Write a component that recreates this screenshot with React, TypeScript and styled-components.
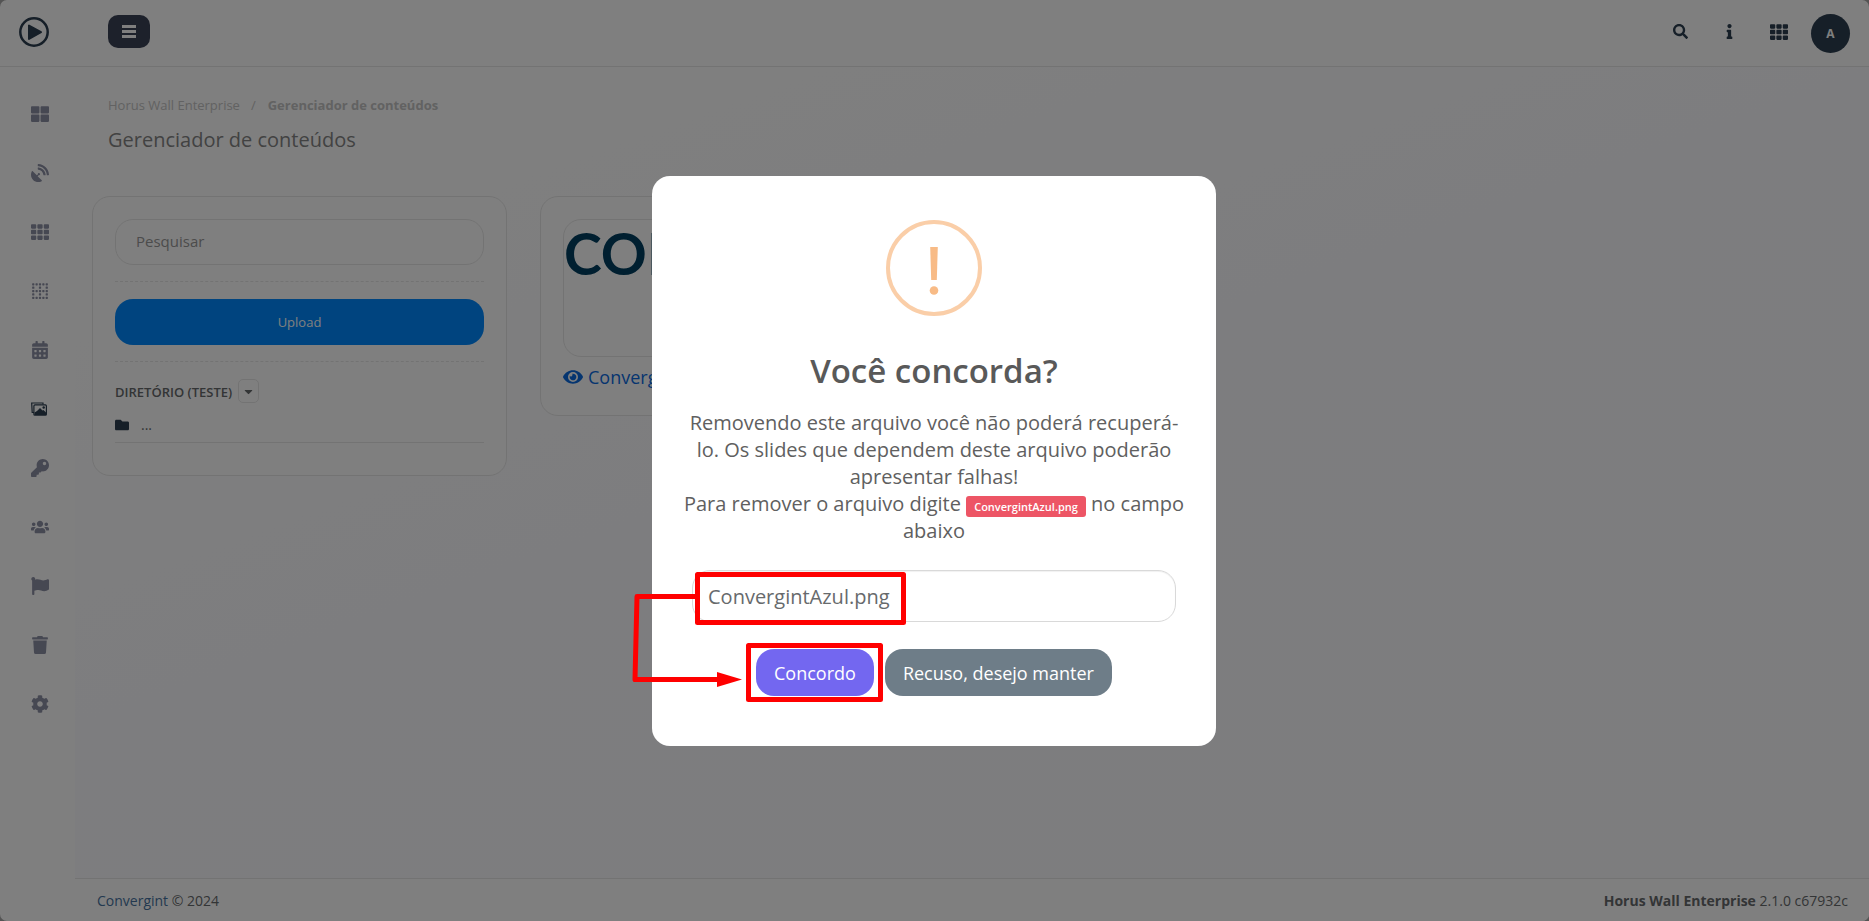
import React from 'react';
import styled, { createGlobalStyle, css } from 'styled-components';
import {
  FaThLarge,
  FaTh,
  FaBorderNone,
  FaCalendarAlt,
  FaSearch,
  FaInfo,
  FaFolder,
  FaEye,
  FaCaretDown,
  FaSatelliteDish,
  FaKey,
  FaUsers,
  FaFlag,
  FaTrash,
  FaCog,
} from 'react-icons/fa';

const Global = createGlobalStyle`
  *, *::before, *::after { box-sizing: border-box; }
  body {
    margin: 0;
    background: #a8a8a8;
    color: #676a6c;
    font-family: 'Open Sans', 'Noto Sans', sans-serif;
    font-size: 14px;
  }
  button, input { font-family: inherit; margin: 0; }
  a { color: inherit; text-decoration: none; }
`;

const line = '#e7e7e7';
const navy = '#2c3e50';

const Page = styled.div`
  display: flex;
  flex-direction: column;
  min-height: 100vh;
  border-radius: 7px;
  overflow: hidden;
  background: #fff;
`;

const Header = styled.header`
  display: flex;
  align-items: center;
  height: 67px;
  padding: 0 19px 3px;
  border-bottom: 1px solid ${line};
`;

const Brand = styled.a`
  display: flex;
  width: 89px;
`;

const MenuButton = styled.button`
  display: grid;
  place-items: center;
  width: 42px;
  height: 33px;
  border: 0;
  border-radius: 10px;
  background: #3b4256;
  color: #fff;
`;

const HeaderTools = styled.nav`
  display: flex;
  align-items: center;
  margin-left: auto;
`;

const ToolButton = styled.button<{ $size: number }>`
  display: grid;
  place-items: center;
  width: 49px;
  height: 38px;
  padding: 0;
  border: 0;
  background: none;
  color: ${navy};
  font-size: ${(p) => p.$size}px;
`;

const Avatar = styled.button`
  width: 39px;
  height: 39px;
  margin-left: 8px;
  margin-top: 4px;
  padding: 0;
  border: 0;
  border-radius: 50%;
  background: ${navy};
  color: #fff;
  font-size: 12px;
  font-weight: 700;
`;

const Body = styled.div`
  display: flex;
  flex: 1;
`;

const Sidebar = styled.nav`
  flex: none;
  width: 75px;
  padding-top: 17px;
`;

const SideLink = styled.a<{ $active?: boolean }>`
  display: flex;
  align-items: center;
  height: 59px;
  padding-left: 31px;
  font-size: 18px;
  color: ${(p) => (p.$active ? navy : '#8d90a5')};
  svg {
    width: auto;
    height: 1em;
  }
`;

const Column = styled.div`
  display: flex;
  flex: 1;
  flex-direction: column;
  min-width: 0;
`;

const Content = styled.main`
  flex: 1;
  padding: 28px 17px;
  background: linear-gradient(160deg, #ffffff 10%, #fbfbfe 45%, #fafafd 100%);
`;

const Breadcrumb = styled.ol`
  display: flex;
  gap: 11px;
  margin: 0;
  padding: 0 16px;
  list-style: none;
  font-size: 13px;
  line-height: 20px;
  color: #c4c4c4;
`;

const Crumb = styled.li<{ $current?: boolean }>`
  ${(p) =>
    p.$current &&
    css`
      font-weight: 700;
      &::before {
        content: '/';
        margin-right: 12px;
        font-weight: 400;
      }
    `}
`;

const Title = styled.h1`
  margin: 10px 0 0;
  padding: 0 16px;
  font-size: 20px;
  font-weight: 400;
  line-height: 30px;
  color: #858585;
`;

const Cards = styled.div`
  display: flex;
  align-items: flex-start;
  gap: 33px;
  margin-top: 41px;
`;

const Card = styled.section`
  width: 415px;
  padding: 22px 22px 26px;
  border: 1px solid ${line};
  border-radius: 18px;
  background: #fff;
`;

const SearchInput = styled.input`
  display: block;
  width: 100%;
  height: 46px;
  padding: 0 20px 2px;
  border: 1px solid ${line};
  border-radius: 18px;
  background: #fff;
  font-size: 15px;
  &::placeholder { color: #989898; opacity: 1; }
`;

const Rule = styled.hr`
  margin: 16px 0 17px;
  border: 0;
  border-top: 1px dashed ${line};
`;

const UploadButton = styled.button`
  display: block;
  width: 100%;
  height: 46px;
  border: 0;
  border-radius: 18px;
  background: #0088ff;
  color: #fff;
  font-size: 13px;
`;

const Directory = styled.div`
  display: flex;
  align-items: center;
  gap: 6px;
`;

const DirectoryTitle = styled.h2`
  margin: 2px 0 0;
  font-size: 13px;
  font-weight: 600;
  line-height: 20px;
`;

const CaretButton = styled.button`
  display: grid;
  place-items: center;
  width: 21px;
  height: 24px;
  padding: 0;
  border: 1px solid ${line};
  border-radius: 5px;
  background: #fff;
  color: #676a6c;
  font-size: 13px;
`;

const Folder = styled.a`
  display: flex;
  align-items: center;
  gap: 12px;
  margin: 13px 0 6px;
  padding-bottom: 8px;
  border-bottom: 1px solid ${line};
  line-height: 18px;
  svg { color: ${navy}; }
`;

const Preview = styled.div`
  height: 138px;
  padding-top: 3px;
  border: 1px solid ${line};
  border-radius: 18px;
  color: #003f60;
  font-family: Lato, sans-serif;
  font-size: 57px;
  font-weight: 700;
  line-height: 60px;
  white-space: nowrap;
`;

const FileLink = styled.a`
  display: flex;
  align-items: center;
  gap: 5px;
  margin-top: 8px;
  font-size: 18px;
  line-height: 24px;
  color: #0b6be0;
`;

const Footer = styled.footer`
  display: flex;
  justify-content: space-between;
  padding: 12px 21px 10px 22px;
  border-top: 1px solid ${line};
  background: #fff;
  line-height: 20px;
`;

const FooterLink = styled.a`
  color: #4773a0;
`;

const Backdrop = styled.div`
  position: fixed;
  inset: 0;
  display: grid;
  place-items: center;
  padding: 1px 1px 0 0;
  background: rgba(0, 0, 0, 0.5);
`;

const Dialog = styled.div`
  position: relative;
  display: flex;
  flex-direction: column;
  align-items: center;
  width: 564px;
  max-width: 100%;
  padding: 44px 28px 50px;
  border-radius: 18px;
  background: #fff;
  text-align: center;
`;

const WarningIcon = styled.svg`
  width: 96px;
  height: 96px;
`;

const DialogTitle = styled.h2`
  margin: 35px 0 18px;
  font-size: 33px;
  font-weight: 600;
  line-height: 40px;
  color: #595959;
`;

const DialogText = styled.p`
  margin: 0;
  font-size: 20px;
  line-height: 27px;
  color: #606060;
`;

const FileBadge = styled.span`
  display: inline-block;
  padding: 0 8px;
  border-radius: 3px;
  background: #ed5565;
  color: #fff;
  font-size: 11px;
  font-weight: 600;
  line-height: 21px;
`;

const ConfirmInput = styled.input`
  width: 484px;
  max-width: 100%;
  height: 52px;
  margin: 26px 0 27px;
  padding: 0 15px;
  border: 1px solid #d9d9d9;
  border-radius: 18px;
  background: #fff;
  box-shadow: inset 0 1px 1px rgba(0, 0, 0, 0.06);
  color: #676a6c;
  font-size: 20px;
`;

const Actions = styled.div`
  display: flex;
  gap: 11px;
`;

const ActionButton = styled.button<{ $tone: 'confirm' | 'cancel' }>`
  height: 47px;
  padding: 0 18px;
  border: 0;
  border-radius: 18px;
  background: ${(p) => (p.$tone === 'confirm' ? '#7367f0' : '#6e7d88')};
  color: #fff;
  font-size: 18px;
  font-weight: 500;
`;

const Marker = styled.svg`
  position: absolute;
  left: -32px;
  bottom: 0;
  width: 300px;
  height: 200px;
  pointer-events: none;
`;

function BarsIcon() {
  return (
    <svg width="14" height="13" viewBox="0 0 14 13" fill="currentColor">
      <path d="M0 0h14v3H0zM0 5h14v3H0zM0 10h14v3H0z" />
    </svg>
  );
}

function ImagesIcon() {
  return (
    <svg viewBox="0 0 16 18" fill="none" stroke="currentColor">
      <path d="M3 12.500H1.200L.7 3h11.300v1.500" strokeWidth="1.200" />
      <rect x="2.900" y="4.900" width="12.500" height="10.300" rx="1" strokeWidth="1.200" />
      <path d="M3.500 15v-2.500l2.500-1.500 3-3 2.500 2.500 1-.5 2.500 2.500v2.500z" fill="currentColor" stroke="none" />
      <circle cx="12.700" cy="7.500" r="1.200" fill="currentColor" stroke="none" />
    </svg>
  );
}

const sideItems = [
  { label: 'Painel', icon: <FaThLarge /> },
  { label: 'Transmissão', icon: <FaSatelliteDish /> },
  { label: 'Grade', icon: <FaTh /> },
  { label: 'Leiautes', icon: <FaBorderNone /> },
  { label: 'Agenda', icon: <FaCalendarAlt /> },
  { label: 'Conteúdos', icon: <ImagesIcon />, active: true },
  { label: 'Permissões', icon: <FaKey /> },
  { label: 'Usuários', icon: <FaUsers /> },
  { label: 'Relatórios', icon: <FaFlag /> },
  { label: 'Lixeira', icon: <FaTrash /> },
  { label: 'Configurações', icon: <FaCog /> },
];

export default function App() {
  return (
    <>
      <Global />
      <Page>
        <Header>
          <Brand href="#" aria-label="Início">
            <svg width="30" height="30" viewBox="0 0 30 30">
              <circle cx="15" cy="15" r="13.700" fill="none" stroke={navy} strokeWidth="2.500" />
              <path d="M10 8.500v13.500l12-6.800z" fill={navy} stroke={navy} strokeWidth="2" strokeLinejoin="round" />
            </svg>
          </Brand>
          <MenuButton aria-label="Menu">
            <BarsIcon />
          </MenuButton>
          <HeaderTools>
            <ToolButton $size={15} aria-label="Buscar"><FaSearch /></ToolButton>
            <ToolButton $size={15} aria-label="Informações"><FaInfo /></ToolButton>
            <ToolButton $size={18} aria-label="Aplicativos"><FaTh /></ToolButton>
            <Avatar>A</Avatar>
          </HeaderTools>
        </Header>
        <Body>
          <Sidebar>
            {sideItems.map((item) => (
              <SideLink key={item.label} href="#" aria-label={item.label} $active={item.active}>
                {item.icon}
              </SideLink>
            ))}
          </Sidebar>
          <Column>
            <Content>
              <Breadcrumb>
                <Crumb><a href="#">Horus Wall Enterprise</a></Crumb>
                <Crumb $current>Gerenciador de conteúdos</Crumb>
              </Breadcrumb>
              <Title>Gerenciador de conteúdos</Title>
              <Cards>
                <Card>
                  <SearchInput type="search" placeholder="Pesquisar" aria-label="Pesquisar" />
                  <Rule />
                  <UploadButton>Upload</UploadButton>
                  <Rule />
                  <Directory>
                    <DirectoryTitle>DIRETÓRIO (TESTE)</DirectoryTitle>
                    <CaretButton aria-label="Opções do diretório"><FaCaretDown /></CaretButton>
                  </Directory>
                  <Folder href="#"><FaFolder />...</Folder>
                </Card>
                <Card>
                  <Preview>CONVERGINT</Preview>
                  <FileLink href="#"><FaEye size={20} />ConvergintAzul.png</FileLink>
                </Card>
              </Cards>
            </Content>
            <Footer>
              <span><FooterLink href="#">Convergint</FooterLink> © 2024</span>
              <span><strong>Horus Wall Enterprise</strong> 2.1.0 c67932c</span>
            </Footer>
          </Column>
        </Body>
      </Page>
      <Backdrop>
        <Dialog role="dialog" aria-modal="true" aria-labelledby="dialog-title">
          <WarningIcon viewBox="0 0 96 96" aria-hidden="true">
            <circle cx="48" cy="48" r="46" fill="none" stroke="#facea8" strokeWidth="4" />
            <path d="M44.200 27h7.600l-1 33h-5.600z" fill="#f8bb86" />
            <circle cx="48" cy="70.500" r="4.300" fill="#f8bb86" />
          </WarningIcon>
          <DialogTitle id="dialog-title">Você concorda?</DialogTitle>
          <DialogText id="dialog-text">
            Removendo este arquivo você não poderá recuperá-lo. Os slides que dependem deste arquivo
            poderão apresentar falhas!
            <br />
            Para remover o arquivo digite <FileBadge>ConvergintAzul.png</FileBadge> no campo abaixo
          </DialogText>
          <ConfirmInput type="text" defaultValue="ConvergintAzul.png" aria-labelledby="dialog-text" />
          <Actions>
            <ActionButton $tone="confirm">Concordo</ActionButton>
            <ActionButton $tone="cancel">Recuso, desejo manter</ActionButton>
          </Actions>
          <Marker viewBox="0 0 300 200" aria-hidden="true" fill="none" stroke="#f00" strokeWidth="5" strokeLinejoin="round">
            <rect x="77.500" y="28.500" width="206" height="48" />
            <rect x="128.500" y="99.500" width="132" height="54" />
            <path d="M77 50.500H17L15 133.500H98" />
            <path d="M97 126l25 7.500-25 7.500z" fill="#f00" stroke="none" />
          </Marker>
        </Dialog>
      </Backdrop>
    </>
  );
}
